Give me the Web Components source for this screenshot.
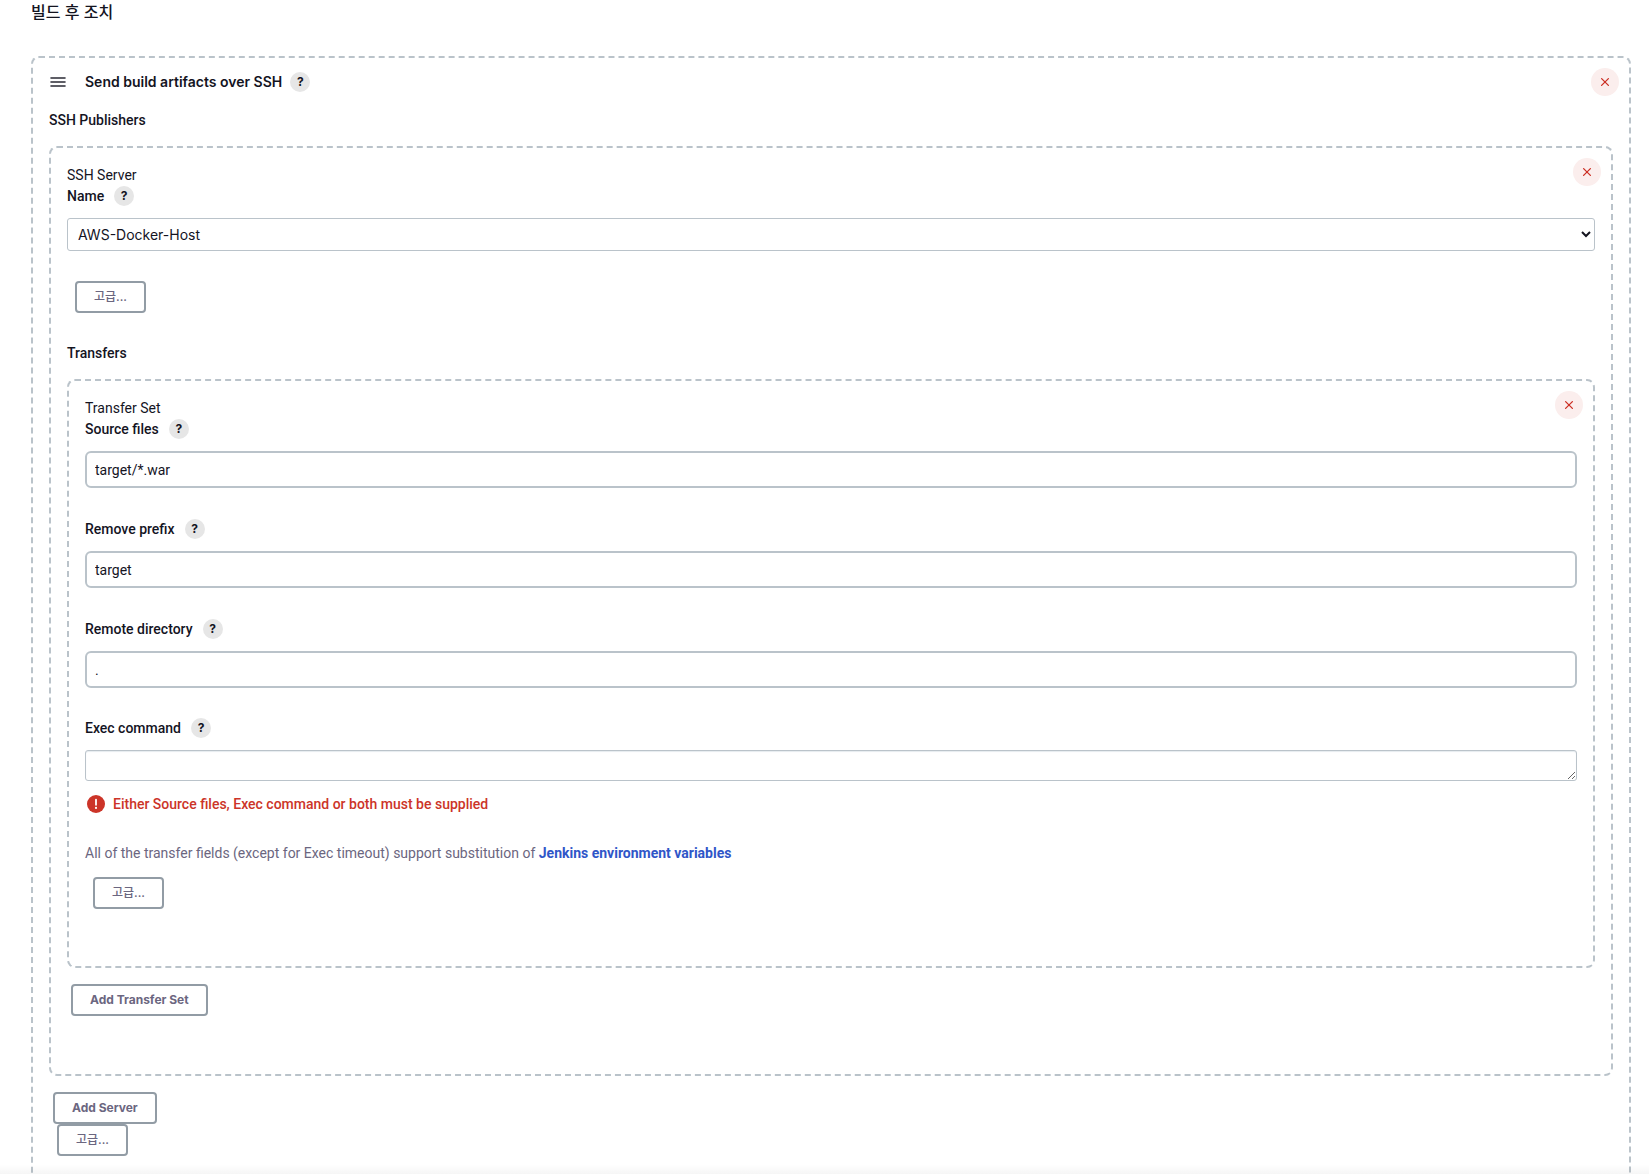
<!DOCTYPE html>
<html lang="ko">
<head>
<meta charset="utf-8">
<title>빌드 후 조치</title>
<style>
:root {
  --text: #14141f;
  --muted: #6b6680;
  --line: #bac3ca;
  --button-line: #929ca5;
  --red: #cc3428;
}
html, body { margin: 0; height: 100%; }
body {
  background: #fff;
  color: var(--text);
  font: 14px/20px Roboto, "Noto Sans CJK KR", sans-serif;
}
</style>
</head>
<body>
<post-build-page>
  <span slot="title">빌드 후 조치</span>
  <config-chunk open-ended heading="Send build artifacts over SSH">
    <config-group heading="SSH Publishers">
      <config-chunk caption="SSH Server" foot="58">
        <select-field label="Name" value="AWS-Docker-Host"></select-field>
        <outline-button indent="8" space="30">고급...</outline-button>
        <config-group heading="Transfers" space="30">
          <config-chunk caption="Transfer Set" foot="57">
            <text-field label="Source files" value="target/*.war"></text-field>
            <text-field label="Remove prefix" value="target" space="31"></text-field>
            <text-field label="Remote directory" value="." space="31"></text-field>
            <area-field label="Exec command" space="30"></area-field>
            <error-note>Either Source files, Exec command or both must be supplied</error-note>
            <help-note>All of the transfer fields (except for Exec timeout) support substitution of <doc-link>Jenkins environment variables</doc-link></help-note>
            <outline-button indent="8" space="14">고급...</outline-button>
          </config-chunk>
        </config-group>
        <outline-button strong indent="4" space="16">Add Transfer Set</outline-button>
      </config-chunk>
    </config-group>
    <outline-button strong indent="4" space="16">Add Server</outline-button>
    <outline-button indent="8">고급...</outline-button>
  </config-chunk>
</post-build-page>

<script>
class Base extends HTMLElement {
  connectedCallback() {
    if (this.shadowRoot) return;
    const root = this.attachShadow({ mode: 'open' });
    const space = Number(this.getAttribute('space') || 0);
    root.innerHTML = `<style>
      *, *::before, *::after { box-sizing: border-box; }
      :host { display: block; margin-top: ${space}px; }
      h2, h3, p { margin: 0; font: inherit; }
      button, input, select, textarea { font: inherit; color: inherit; margin: 0; }
      ${this.css()}
    </style>${this.html()}`;
  }
  attr(name) { return this.getAttribute(name) || ''; }
  css() { return ''; }
  html() { return '<slot></slot>'; }
}

customElements.define('post-build-page', class extends Base {
  css() { return `
    :host { display: flex; flex-direction: column; height: 100vh; overflow: hidden; position: relative; padding: 0 18px 0 31px; box-sizing: border-box; }
    h2 { font-family: Inter, "Noto Sans CJK KR", sans-serif; font-size: 16px; line-height: 24px; font-weight: 500; margin-bottom: 32px; flex: none; }
    .shade { position: absolute; left: 0; right: 0; bottom: 0; height: 10px; pointer-events: none;
      background: linear-gradient(rgba(0,0,0,0), rgba(0,0,0,.035)); }
  `; }
  html() { return `<h2><slot name="title"></slot></h2><slot></slot><div class="shade"></div>`; }
});

customElements.define('help-button', class extends Base {
  css() { return `
    :host { display: inline-flex; }
    button { width: 20px; height: 20px; border: 0; border-radius: 50%; background: #e6e6e6; padding: 0;
      font-family: Inter, sans-serif; font-size: 12px; line-height: 20px; font-weight: 700; text-align: center; }
  `; }
  html() { return `<button type="button" aria-label="Help">?</button>`; }
});

customElements.define('close-button', class extends Base {
  css() { return `
    :host { position: absolute; top: 10px; right: 10px; }
    button { display: grid; place-items: center; width: 28px; height: 28px; padding: 0; border: 0; border-radius: 50%; background: #fbeeed; }
    svg { display: block; }
  `; }
  html() { return `<button type="button" aria-label="Delete"><svg width="10" height="10" viewBox="0 0 10 10" fill="none" stroke="#cc2f24" stroke-width="1.3" stroke-linecap="round"><path d="M1.6 1.6 8.4 8.4M8.4 1.6 1.6 8.4"/></svg></button>`; }
});

customElements.define('outline-button', class extends Base {
  css() { return `
    :host { display: flex; padding-left: ${Number(this.attr('indent'))}px; }
    button { height: 32px; padding: 0 17px; border: 2px solid var(--button-line); border-radius: 4px; background: #fff;
      font-family: Inter, "Noto Sans CJK KR", sans-serif;
      color: var(--muted); font-size: 12px; line-height: 20px; font-weight: ${this.hasAttribute('strong') ? 700 : 500}; white-space: nowrap; }
  `; }
  html() { return `<button type="button"><slot></slot></button>`; }
});

customElements.define('config-group', class extends Base {
  css() { return `h3 { font-weight: 500; line-height: 20px; margin-bottom: 16px; }`; }
  html() { return `<h3>${this.attr('heading')}</h3><slot></slot>`; }
});

customElements.define('config-chunk', class extends Base {
  css() {
    const open = this.hasAttribute('open-ended');
    return `
    :host { position: relative; box-sizing: border-box; border: 2px dashed var(--line); border-radius: 8px;
      padding: ${open ? 14 : 17}px 16px ${Number(this.attr('foot'))}px;
      ${open ? 'flex: 1 0 auto; margin-bottom: -20px;' : ''} }
    .head { display: flex; align-items: center; height: 20px; margin-bottom: 18px; }
    .grip { display: block; margin: 0 19px 0 1px; }
    h2 { font-family: Inter, sans-serif; font-weight: 600; margin-right: 8px; }
    p { margin-bottom: 1px; }
  `; }
  html() {
    const top = this.hasAttribute('heading')
      ? `<div class="head"><svg class="grip" width="16" height="10" viewBox="0 0 16 10" fill="none" stroke="#2a2a35" stroke-width="1.6" stroke-linecap="round"><path d="M1 1h14M1 5h14M1 9h14"/></svg><h2>${this.attr('heading')}</h2><help-button></help-button></div>`
      : `<p>${this.attr('caption')}</p>`;
    return `${top}<close-button></close-button><slot></slot>`;
  }
});

class Field extends Base {
  css() { return `
    .label { display: flex; align-items: center; gap: 10px; height: 20px; margin-bottom: 12px; }
    label { font-weight: 500; }
    input, select, textarea { display: block; width: 100%; background: #fff; outline: 0; }
    ${this.controlCss()}
  `; }
  html() { return `<div class="label"><label for="control">${this.attr('label')}</label><help-button></help-button></div>${this.control()}`; }
}

customElements.define('text-field', class extends Field {
  controlCss() { return `input { height: 37px; padding: 0 8px; border: 2px solid var(--line); border-radius: 6px; }`; }
  control() { return `<input id="control" type="text" value="${this.attr('value')}">`; }
});

customElements.define('select-field', class extends Field {
  controlCss() { return `
    .wrap { display: grid; align-items: center; }
    .wrap > * { grid-area: 1 / 1; }
    select { appearance: none; height: 33px; padding: 0 24px 0 10px; border: 1px solid var(--line); border-radius: 3px; font-family: Inter, sans-serif; }
    svg { justify-self: end; margin-right: 4px; pointer-events: none; }
  `; }
  control() { return `<div class="wrap"><select id="control"><option>${this.attr('value')}</option></select><svg width="10" height="7" viewBox="0 0 10 7" fill="none" stroke="#14141f" stroke-width="2"><path d="M1 1l4 4 4-4"/></svg></div>`; }
});

customElements.define('area-field', class extends Field {
  controlCss() { return `textarea { height: 31px; padding: 4px 8px; border: 1px solid var(--line); border-radius: 3px; resize: vertical; overflow: hidden; box-shadow: inset 0 1px 1px #e6ebef; }`; }
  control() { return `<textarea id="control" rows="1"></textarea>`; }
});

customElements.define('error-note', class extends Base {
  css() { return `
    :host { display: flex; align-items: center; gap: 8px; margin-top: 13px; padding-left: 2px; color: var(--red); font-weight: 500; }
    svg { flex: none; }
  `; }
  html() { return `<svg width="18" height="18" viewBox="0 0 18 18"><circle cx="9" cy="9" r="9" fill="#cc3428"/><path d="M9 4.6v5.2" stroke="#fff" stroke-width="1.8" stroke-linecap="round"/><circle cx="9" cy="12.9" r="1.1" fill="#fff"/></svg><span><slot></slot></span>`; }
});

customElements.define('help-note', class extends Base {
  css() { return `:host { margin-top: 29px; color: var(--muted); }`; }
});

customElements.define('doc-link', class extends Base {
  css() { return `:host { display: inline; } a { color: #2f56c8; font-weight: 700; text-decoration: none; }`; }
  html() { return `<a href="#"><slot></slot></a>`; }
});
</script>
</body>
</html>
